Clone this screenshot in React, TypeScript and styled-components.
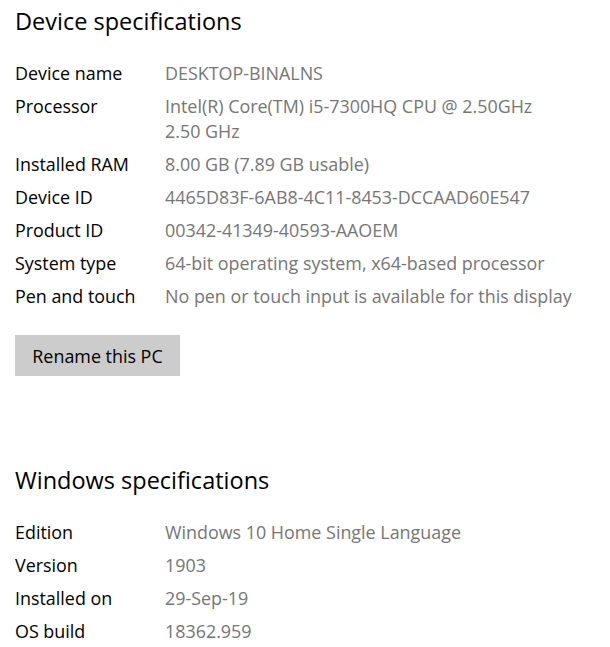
import styled, {createGlobalStyle} from 'styled-components'

const GlobalStyle = createGlobalStyle`
    html, body {
        margin: 0;
        padding: 0;
        background: #ffffff;
    }
    body {
        font-family: "Open Sans", "Noto Sans", "Liberation Sans", sans-serif;
        color: #000000;
    }
`

const Page = styled.div`
    display: flex;
    flex-direction: column;
    padding: 4px 15px 0 15px;
`

const Section = styled.section`
    display: flex;
    flex-direction: column;
`

const Heading = styled.h2`
    margin: 0;
    font-size: 23.5px;
    font-weight: 400;
    line-height: 34px;
    color: #000000;
`

const SpecList = styled.dl`
    display: grid;
    grid-template-columns: 150px 1fr;
    row-gap: 8px;
    margin: 23px 0 0 0;
    font-size: 17.9px;
    line-height: 25px;
`

const Label = styled.dt`
    margin: 0;
    color: #000000;
`

const Value = styled.dd`
    margin: 0;
    color: #767676;
`

const RenameButton = styled.button`
    align-self: flex-start;
    margin-top: 26px;
    width: 165px;
    height: 41px;
    border: none;
    background: #cccccc;
    font-family: inherit;
    font-size: 17.9px;
    color: #000000;
    padding: 0;
`

const Spacer = styled.div`
    height: 87px;
`

type Spec = {
    label: string
    value: string[]
}

const deviceSpecs: Spec[] = [
    {label: 'Device name', value: ['DESKTOP-BINALNS']},
    {label: 'Processor', value: ['Intel(R) Core(TM) i5-7300HQ CPU @ 2.50GHz', '2.50 GHz']},
    {label: 'Installed RAM', value: ['8.00 GB (7.89 GB usable)']},
    {label: 'Device ID', value: ['4465D83F-6AB8-4C11-8453-DCCAAD60E547']},
    {label: 'Product ID', value: ['00342-41349-40593-AAOEM']},
    {label: 'System type', value: ['64-bit operating system, x64-based processor']},
    {label: 'Pen and touch', value: ['No pen or touch input is available for this display']},
]

const windowsSpecs: Spec[] = [
    {label: 'Edition', value: ['Windows 10 Home Single Language']},
    {label: 'Version', value: ['1903']},
    {label: 'Installed on', value: ['29-Sep-19']},
    {label: 'OS build', value: ['18362.959']},
]

function Specs({items}: { items: Spec[] }) {
    return (
        <SpecList>
            {items.map(s => (
                <>
                    <Label key={s.label + '-l'}>{s.label}</Label>
                    <Value key={s.label + '-v'}>
                        {s.value.map((line, i) => (
                            <div key={i}>{line}</div>
                        ))}
                    </Value>
                </>
            ))}
        </SpecList>
    )
}

export default function App() {
    return (
        <>
            <GlobalStyle/>
            <Page>
                <Section>
                    <Heading>Device specifications</Heading>
                    <Specs items={deviceSpecs}/>
                    <RenameButton>Rename this PC</RenameButton>
                </Section>
                <Spacer/>
                <Section>
                    <Heading>Windows specifications</Heading>
                    <Specs items={windowsSpecs}/>
                </Section>
            </Page>
        </>
    )
}
